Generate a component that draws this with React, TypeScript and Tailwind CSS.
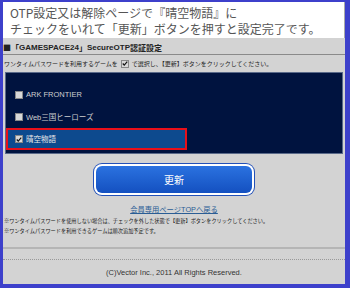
import React from "react";

function Box({ checked }: { checked?: boolean }) {
  return (
    <span className="inline-flex w-[8px] h-[8px] bg-[#d8d8d8] border border-[#888] items-center justify-center shrink-0">
      {checked && (
        <svg width="7" height="7" viewBox="0 0 8 8">
          <path d="M1 4 L3 6.2 L7 1.5" stroke="#111" strokeWidth="1.6" fill="none" />
        </svg>
      )}
    </span>
  );
}

export default function App() {
  return (
    <div className="w-[350px] h-[288px] bg-[#3d40cb] pt-[2px] pl-[3px] pr-[5px] pb-[4px] font-['Noto_Sans_CJK_JP','Liberation_Sans',sans-serif]">
      <div className="h-full flex flex-col bg-[#d3d3d3] overflow-hidden">
        <div className="bg-white h-[36px] pl-[7px] pt-[3px] text-[12px] leading-[16px] text-[#555] border-r border-[#aaa] flex flex-col">
          <span>OTP設定又は解除ページで『晴空物語』に</span>
          <span>チェックをいれて「更新」ボタンを押すと設定完了です。</span>
        </div>
        <div className="h-[16px] mt-[1px] border-b border-[#8a8a8a] flex items-end pb-[2px] text-[8px] font-bold text-[#222] leading-none">
          <span>■「</span>
          <span className="font-['Liberation_Sans',sans-serif]">GAMESPACE24</span>
          <span>」</span>
          <span className="font-['Liberation_Sans',sans-serif]">SecureOTP</span>
          <span>認証設定</span>
        </div>
        <div className="h-[17px] flex items-center pl-[1px] text-[6px] text-[#222] leading-none">
          <span>ワンタイムパスワードを利用するゲームを</span>
          <span className="mx-[3px] inline-flex">
            <Box checked />
          </span>
          <span>で選択し、【更新】ボタンをクリックしてください。</span>
        </div>
        <div className="mx-[2px] h-[82px] bg-[#00133f] border border-[#5a6a8a] pt-[11px] flex flex-col">
          <div className="h-[22px] flex items-center gap-[3px] pl-[9px] text-[7.5px] text-[#cfcfcf] font-['Liberation_Sans',sans-serif]">
            <Box />
            <span>ARK FRONTIER</span>
          </div>
          <div className="h-[22px] flex items-center gap-[3px] pl-[9px] text-[7.5px] text-[#cfcfcf]">
            <Box />
            <span>
              <span className="font-['Liberation_Sans',sans-serif]">Web</span>三国ヒーローズ
            </span>
          </div>
          <div className="h-[22px] w-[181px] flex items-center gap-[3px] pl-[7px] border-2 border-[#e8101a] bg-[#0d4a8e] text-[7.5px] text-[#e8e8e8]">
            <span className="inline-flex bg-white">
              <Box checked />
            </span>
            <span>晴空物語</span>
          </div>
        </div>
        <div className="flex justify-center mt-[9px]">
          <div className="w-[162px] h-[33px] rounded-[9px] bg-[#2351b8] p-[1px]">
            <div className="w-full h-full rounded-[8px] bg-white p-[2px]">
              <div className="w-full h-full rounded-[6px] bg-gradient-to-b from-[#2b72e0] to-[#1450c0] flex items-center justify-center text-white text-[10px]">
                更新
              </div>
            </div>
          </div>
        </div>
        <div className="flex justify-center mt-[8px] h-[11px] items-center">
          <span className="text-[7.3px] text-[#2a5d95] underline leading-none">
            会員専用ページ<span className="font-['Liberation_Sans',sans-serif]">TOP</span>へ戻る
          </span>
        </div>
        <div className="pl-[1px] mt-[1px] text-[5.2px] leading-[10px] text-[#222] flex flex-col">
          <span>※ワンタイムパスワードを使用しない場合は、チェックを外した状態で【更新】ボタンをクリックしてください。</span>
          <span>※ワンタイムパスワードを利用できるゲームは順次追加予定です。</span>
        </div>
        <div className="mt-[11px] h-[2px] bg-[#b5b5b5]" />
        <div className="mt-[10px] border-t border-dotted border-[#999]" />
        <div className="flex-1 flex items-center justify-center pt-[2px] text-[7.5px] text-[#333] font-['Liberation_Sans',sans-serif]">
          (C)Vector Inc., 2011 All Rights Reserved.
        </div>
      </div>
    </div>
  );
}
